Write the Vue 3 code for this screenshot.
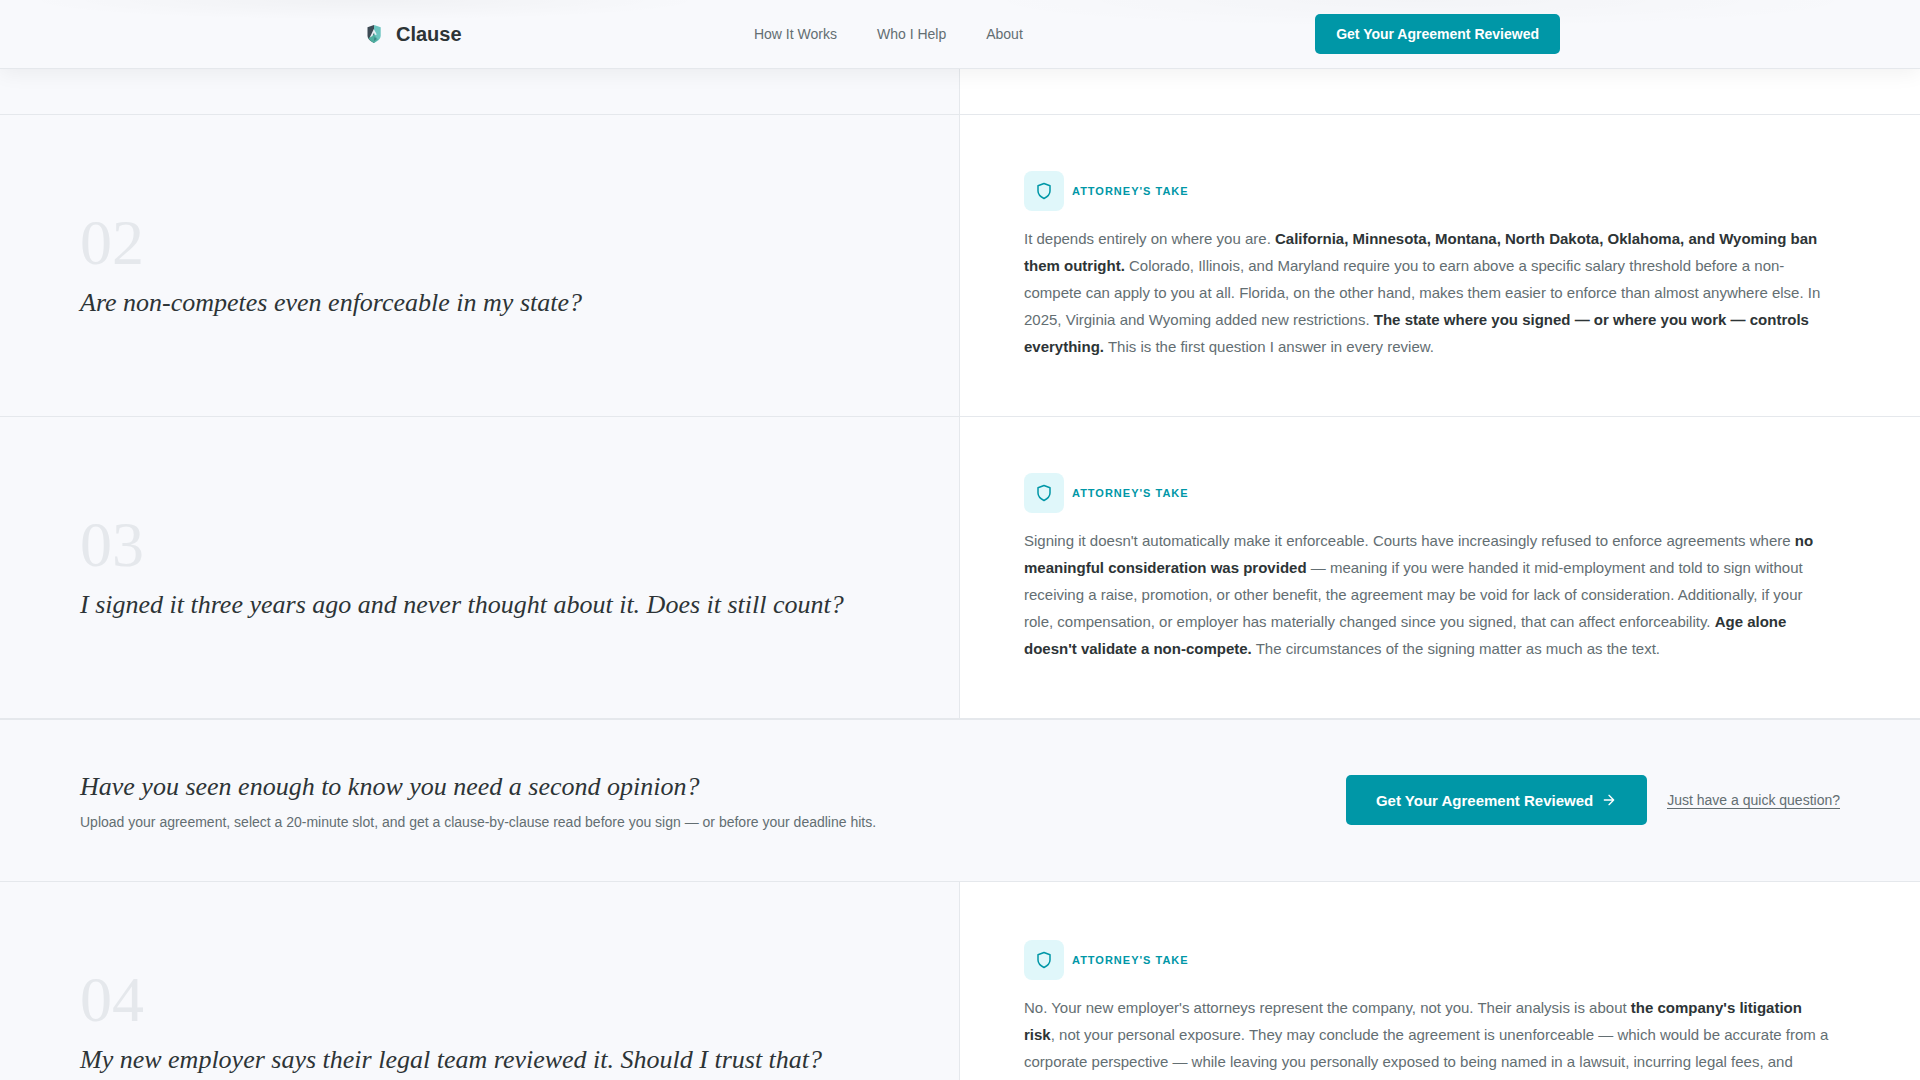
<script setup>
const navLinks = ['How It Works', 'Who I Help', 'About']

const firstQuestions = [
  {
    number: '02',
    question: 'Are non-competes even enforceable in my state?',
    take: [
      { text: 'It depends entirely on where you are. ' },
      { text: 'California, Minnesota, Montana, North Dakota, Oklahoma, and Wyoming ban them outright.', strong: true },
      { text: ' Colorado, Illinois, and Maryland require you to earn above a specific salary threshold before a non-compete can apply to you at all. Florida, on the other hand, makes them easier to enforce than almost anywhere else. In 2025, Virginia and Wyoming added new restrictions. ' },
      { text: 'The state where you signed — or where you work — controls everything.', strong: true },
      { text: ' This is the first question I answer in every review.' },
    ],
  },
  {
    number: '03',
    question: 'I signed it three years ago and never thought about it. Does it still count?',
    take: [
      { text: "Signing it doesn't automatically make it enforceable. Courts have increasingly refused to enforce agreements where " },
      { text: 'no meaningful consideration was provided', strong: true },
      { text: ' — meaning if you were handed it mid-employment and told to sign without receiving a raise, promotion, or other benefit, the agreement may be void for lack of consideration. Additionally, if your role, compensation, or employer has materially changed since you signed, that can affect enforceability. ' },
      { text: "Age alone doesn't validate a non-compete.", strong: true },
      { text: ' The circumstances of the signing matter as much as the text.' },
    ],
  },
]

const moreQuestions = [
  {
    number: '04',
    question: 'My new employer says their legal team reviewed it. Should I trust that?',
    take: [
      { text: "No. Your new employer's attorneys represent the company, not you. Their analysis is about " },
      { text: "the company's litigation risk", strong: true },
      { text: ', not your personal exposure. They may conclude the agreement is unenforceable — which would be accurate from a corporate perspective — while leaving you personally exposed to being named in a lawsuit, incurring legal fees, and' },
    ],
  },
]

const sections = [
  { id: 'first', items: firstQuestions, cta: true },
  { id: 'more', items: moreQuestions, cta: false },
]
</script>

<template>
  <div class="page">
    <header class="header">
      <div class="header__inner">
        <a class="brand" href="#">
          <svg class="brand__mark" viewBox="0 0 28 28" aria-hidden="true">
            <path d="M14 5 L7.500 7.200 V15.500 C7.500 19 10.500 21.200 14 23 Z" fill="#3d4a54" />
            <path d="M14 5 L20.700 7.200 V15.500 C20.700 19 17.500 21.200 14 23 Z" fill="#6cc5c0" />
            <path d="M8.500 18 L14 14.500 L18 19.500 L14 23 C11.500 21.800 9.500 20.300 8.500 18 Z" fill="#4fae9f" />
            <path d="M9.800 17.500 L13.800 9 L16.800 14.500 L15.200 15 L14 12.800 L12.500 16 Z" fill="#e6eef3" />
            <path d="M14.500 17 L16.500 19 L14 21 Z" fill="#3b7f84" />
          </svg>
          <span class="brand__name">Clause</span>
        </a>
        <nav class="nav">
          <a v-for="link in navLinks" :key="link" class="nav__link" href="#">{{ link }}</a>
        </nav>
        <button class="btn btn--small" type="button">Get Your Agreement Reviewed</button>
      </div>
    </header>

    <main>
      <div class="row row--tail">
        <div class="row__question"></div>
        <div class="row__answer"></div>
      </div>

      <template v-for="section in sections" :key="section.id">
        <section class="questions" :class="`questions--${section.id}`">
          <article v-for="item in section.items" :key="item.number" class="row">
            <div class="row__question">
              <span class="row__number">{{ item.number }}</span>
              <h2 class="row__title">{{ item.question }}</h2>
            </div>
            <div class="row__answer">
              <div class="take">
                <span class="take__icon">
                  <svg viewBox="0 0 24 24" aria-hidden="true">
                    <path d="M12 22s8-4 8-10V5l-8-3-8 3v7c0 6 8 10 8 10z" />
                  </svg>
                </span>
                <span class="take__label">Attorney's Take</span>
              </div>
              <p class="row__text">
                <template v-for="(part, i) in item.take" :key="i">
                  <strong v-if="part.strong">{{ part.text }}</strong>
                  <template v-else>{{ part.text }}</template>
                </template>
              </p>
            </div>
          </article>
        </section>

        <section v-if="section.cta" class="cta">
          <div class="cta__copy">
            <h2 class="cta__title">Have you seen enough to know you need a second opinion?</h2>
            <p class="cta__text">
              Upload your agreement, select a 20-minute slot, and get a clause-by-clause read before you sign — or before your deadline hits.
            </p>
          </div>
          <div class="cta__actions">
            <button class="btn btn--large" type="button">
              Get Your Agreement Reviewed
              <svg class="btn__arrow" viewBox="0 0 24 24" aria-hidden="true">
                <path d="M5 12h14M12 5l7 7-7 7" />
              </svg>
            </button>
            <a class="cta__link" href="#">Just have a quick question?</a>
          </div>
        </section>
      </template>
    </main>
  </div>
</template>

<style>
body {
  margin: 0;
}
</style>

<style scoped>
.page {
  --paper: #f8f9fc;
  --ink: #2d3436;
  --muted: #636e72;
  --line: #e5e8ec;
  --teal: #0097a7;
  height: 100vh;
  overflow: hidden;
  background: #fff;
  color: var(--ink);
  font-family: "Liberation Sans", Arial, sans-serif;
}

.header {
  position: relative;
  z-index: 10;
  background:
    radial-gradient(ellipse 18% 20px at 19% 0, rgba(0, 0, 0, 0.03), transparent),
    radial-gradient(ellipse 24% 28px at 74% 0, rgba(0, 0, 0, 0.02), transparent),
    var(--paper);
  border-bottom: 1px solid var(--line);
  box-shadow: 0 4px 20px rgba(0, 0, 0, 0.06);
}

.header__inner {
  display: flex;
  align-items: center;
  justify-content: space-between;
  max-width: 1200px;
  margin: 0 auto;
  padding: 14px 0;
}

.brand {
  display: flex;
  align-items: center;
  gap: 8px;
  color: var(--ink);
  text-decoration: none;
}

.brand__mark {
  width: 28px;
  height: 28px;
}

.brand__name {
  font-size: 20px;
  font-weight: 700;
}

.nav {
  display: flex;
  gap: 40px;
}

.nav__link {
  color: var(--muted);
  font-size: 14px;
  text-decoration: none;
}

.btn {
  display: inline-flex;
  align-items: center;
  justify-content: center;
  gap: 8px;
  border: 0;
  border-radius: 5px;
  background: var(--teal);
  color: #fff;
  font-family: inherit;
  font-weight: 700;
  white-space: nowrap;
  cursor: pointer;
}

.btn--small {
  height: 40px;
  padding: 0 21px;
  font-size: 14px;
}

.btn--large {
  height: 50px;
  padding: 0 30px;
  font-size: 15px;
}

.btn__arrow {
  width: 16px;
  height: 16px;
  fill: none;
  stroke: currentColor;
  stroke-width: 2;
  stroke-linecap: round;
  stroke-linejoin: round;
}

.row {
  display: grid;
  grid-template-columns: 1fr 1fr;
  border-bottom: 1px solid var(--line);
}

.row--tail {
  height: 45px;
}

.row__question {
  display: flex;
  flex-direction: column;
  justify-content: center;
  padding: 0 64px 0 80px;
  border-right: 1px solid var(--line);
  background: var(--paper);
}

.row__answer {
  padding: 56px 88px 56px 64px;
}

.row--tail .row__question,
.row--tail .row__answer {
  padding-top: 0;
  padding-bottom: 0;
}

.questions--more .row {
  min-height: 280px;
}

.questions--more .row__answer {
  padding-top: 58px;
}

.row__number {
  margin-bottom: 11px;
  color: var(--line);
  font-family: "Liberation Serif", "Times New Roman", serif;
  font-size: 64px;
  line-height: 1;
}

.row__title {
  margin: 0;
  font-family: "Liberation Serif", "Times New Roman", serif;
  font-size: 26px;
  font-style: italic;
  font-weight: 400;
  line-height: 34px;
}

.take {
  display: flex;
  align-items: center;
  gap: 8px;
  margin-bottom: 14px;
}

.take__icon {
  display: flex;
  align-items: center;
  justify-content: center;
  width: 40px;
  height: 40px;
  border-radius: 8px;
  background: #e0f7fa;
}

.take__icon svg {
  width: 18px;
  height: 18px;
  fill: none;
  stroke: var(--teal);
  stroke-width: 2;
  stroke-linecap: round;
  stroke-linejoin: round;
}

.take__label {
  color: var(--teal);
  font-size: 11px;
  font-weight: 700;
  letter-spacing: 1px;
  text-transform: uppercase;
}

.row__text {
  margin: 0;
  color: var(--muted);
  font-size: 15px;
  line-height: 27px;
}

.row__text strong {
  color: var(--ink);
}

.cta {
  display: flex;
  align-items: center;
  justify-content: space-between;
  gap: 40px;
  padding: 48px 80px 49px;
  border-top: 1px solid var(--line);
  border-bottom: 1px solid var(--line);
  background: var(--paper);
}

.cta__title {
  margin: 0 0 6px;
  font-family: "Liberation Serif", "Times New Roman", serif;
  font-size: 26px;
  font-style: italic;
  font-weight: 400;
  line-height: 38px;
}

.cta__text {
  margin: 0;
  color: var(--muted);
  font-size: 14px;
  line-height: 20px;
}

.cta__actions {
  display: flex;
  align-items: center;
  gap: 20px;
}

.cta__link {
  border-bottom: 1px solid var(--muted);
  color: var(--muted);
  font-size: 14px;
  text-decoration: none;
}
</style>
